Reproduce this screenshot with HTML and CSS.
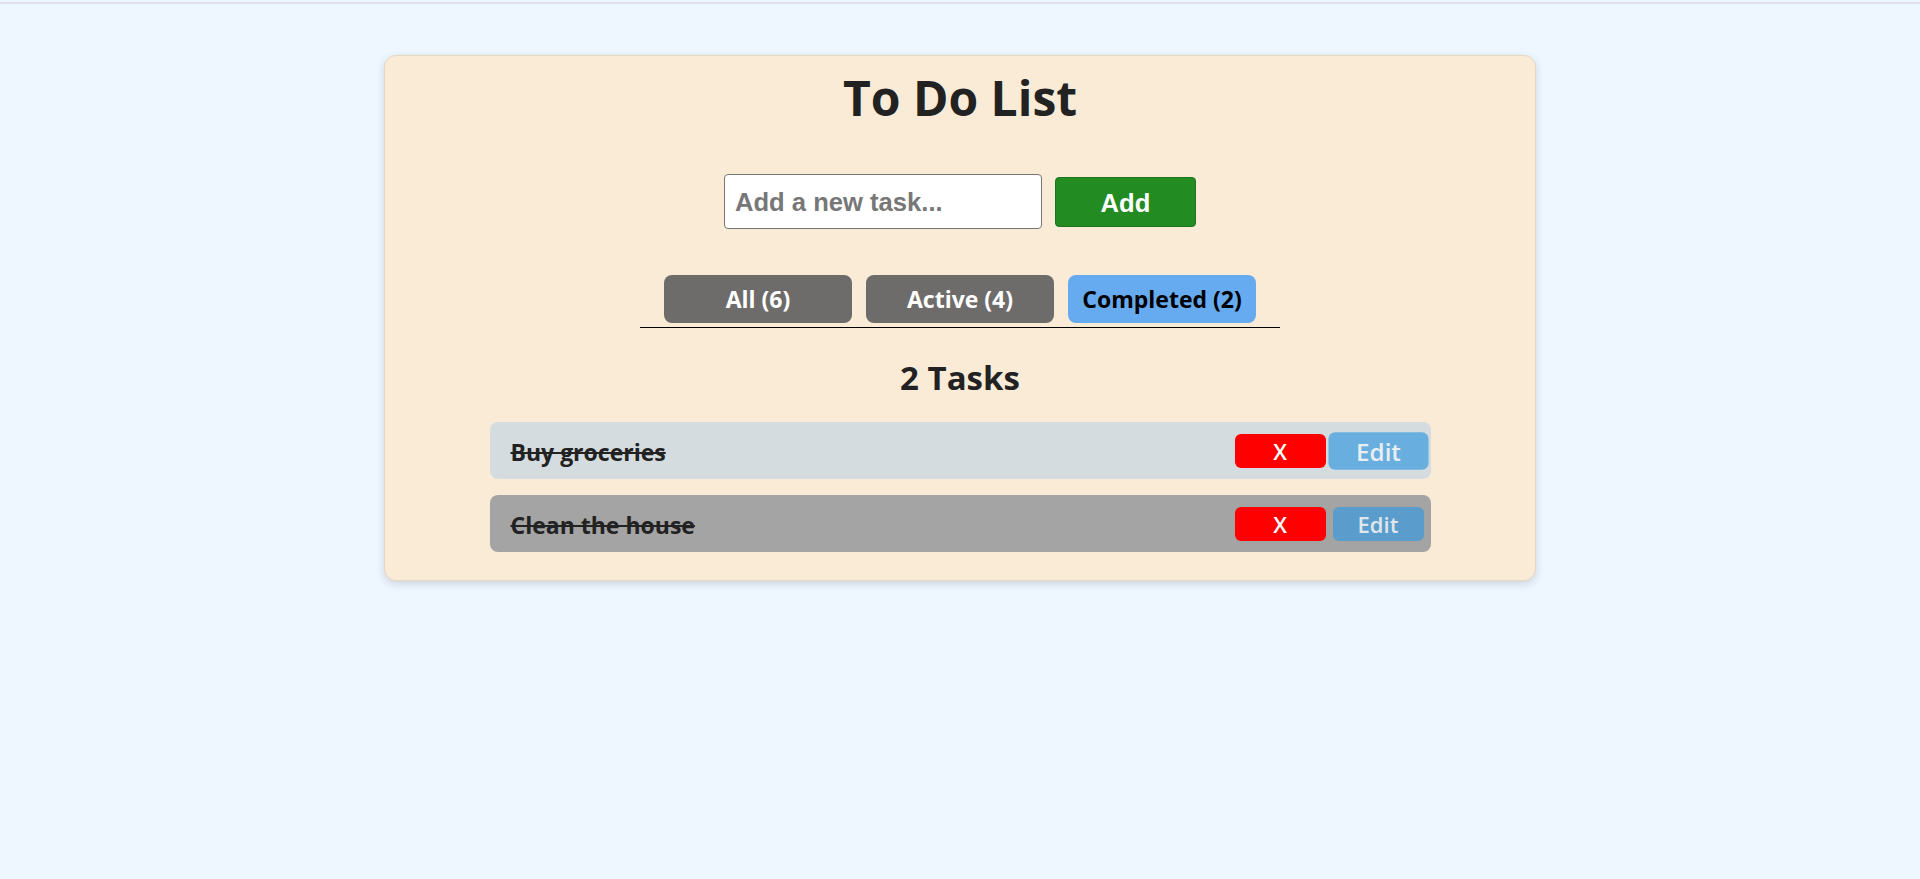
FILE: index.html
```html
<!DOCTYPE html>
<html lang="en">
<head>
<meta charset="utf-8">
<title>To Do List</title>
<link rel="stylesheet" href="styles.css">
</head>
<body>
<div class="topline"></div>
<main class="card">
  <h1 class="title">To Do List</h1>
  <form class="add-form">
    <input class="task-input" type="text" placeholder="Add a new task...">
    <button class="add-btn" type="button">Add</button>
  </form>
  <div class="tabs-wrap">
    <div class="tabs">
      <button class="tab" type="button">All (6)</button>
      <button class="tab" type="button">Active (4)</button>
      <button class="tab tab-active" type="button">Completed (2)</button>
    </div>
  </div>
  <h2 class="count">2 Tasks</h2>
  <ul class="list">
    <li class="item item-hover">
      <span class="item-text">Buy groceries</span>
      <div class="actions">
        <button class="btn-del" type="button">X</button>
        <button class="btn-edit btn-edit-hover" type="button">Edit</button>
      </div>
    </li>
    <li class="item">
      <span class="item-text">Clean the house</span>
      <div class="actions">
        <button class="btn-del" type="button">X</button>
        <button class="btn-edit" type="button">Edit</button>
      </div>
    </li>
  </ul>
</main>
</body>
</html>
```
FILE: styles.css
```css
* { box-sizing: border-box; }
html, body { margin: 0; padding: 0; }
body {
  background: #eef6ff;
  min-height: 879px;
  font-family: "Open Sans", "Noto Sans", sans-serif;
  color: #222;
}
.topline {
  height: 2px;
  margin-top: 2px;
  background: #e2dfe8;
}
.card {
  width: 1152px;
  margin: 51px auto 0;
  background: #faebd7;
  border: 1px solid #e9d6bf;
  border-radius: 12px;
  box-shadow: 0 3px 10px rgba(0, 0, 0, 0.14);
  padding: 0 0 28px;
  display: flex;
  flex-direction: column;
  align-items: center;
}
.title {
  margin: 12px 0 0;
  font-size: 48px;
  line-height: 60px;
  font-weight: 700;
  color: #222;
}
.add-form {
  margin-top: 46px;
  display: flex;
  align-items: center;
  gap: 13px;
}
.task-input {
  width: 318px;
  height: 55px;
  padding: 2px 10px 0;
  border: 1px solid #767676;
  border-radius: 4px;
  background: #fff;
  font-family: "Liberation Sans", Arial, sans-serif;
  font-size: 25.6px;
  font-weight: 700;
  color: #222;
}
.task-input::placeholder { color: #777; }
.add-btn {
  width: 141px;
  height: 50px;
  padding: 3px 0 0;
  border: 1px solid #1d741d;
  border-radius: 4px;
  background: #228b22;
  color: #fff;
  font-family: "Liberation Sans", Arial, sans-serif;
  font-size: 25.6px;
  font-weight: 700;
}
.tabs-wrap {
  margin-top: 46px;
  display: flex;
  justify-content: center;
}
.tabs {
  display: flex;
  gap: 14px;
  padding: 0 24px 4px;
  border-bottom: 1.5px solid #000;
}
.tab {
  width: 188px;
  height: 48px;
  border: none;
  border-radius: 8px;
  background: #6e6b6b;
  color: #fff;
  font-family: "Open Sans", "Noto Sans", sans-serif;
  font-size: 23px;
  font-weight: 700;
}
.tab-active {
  background: #66aaf0;
  color: #000;
}
.count {
  margin: 30px 0 0;
  font-size: 33px;
  line-height: 40px;
  font-weight: 700;
  color: #222;
}
.list {
  list-style: none;
  margin: 24px 0 0;
  padding: 0;
  width: 941px;
  display: flex;
  flex-direction: column;
  gap: 16px;
}
.item {
  height: 57px;
  display: flex;
  align-items: center;
  justify-content: space-between;
  padding: 0 7px 0 21px;
  border-radius: 8px;
  background: #a4a4a4;
}
.item-hover { background: #d4dcdf; }
.item-text {
  font-size: 23px;
  font-weight: 700;
  color: #222;
  text-decoration: line-through;
  padding-top: 3px;
}
.actions {
  display: flex;
  align-items: center;
  gap: 7px;
}
.btn-del, .btn-edit {
  width: 91px;
  height: 34px;
  border: none;
  border-radius: 6px;
  font-family: "Open Sans", "Noto Sans", sans-serif;
  font-size: 22px;
  font-weight: 600;
  padding: 0;
}
.btn-del {
  background: #ff0000;
  color: #fff;
}
.btn-edit {
  background: #5a9dcc;
  color: #dfe6ec;
}
.btn-edit-hover {
  background: #68aede;
  color: #e8eef2;
  transform: scale(1.1);
}
```
